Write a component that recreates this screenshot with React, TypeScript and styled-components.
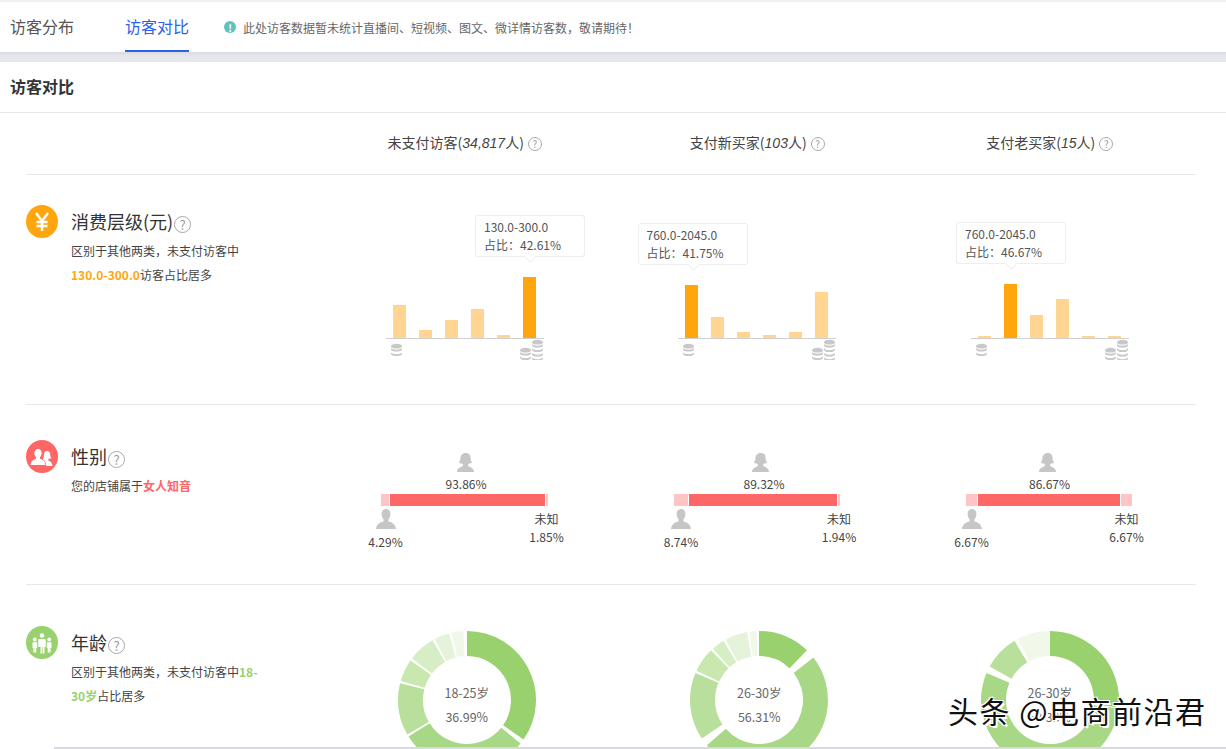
import styled, { createGlobalStyle } from "styled-components";

const orange = "#ffa60f";
const coral = "#ff6666";
const green = "#99d16e";

const GlobalStyle = createGlobalStyle`
  html, body {
    margin: 0;
    padding: 0;
    background: #fff;
    overflow: hidden;
  }
  * {
    box-sizing: border-box;
  }
  body {
    font-family: "Noto Sans CJK SC", "Liberation Sans", sans-serif;
    color: #333;
  }
`;

interface BarData {
  id: string;
  bars: number[];
  active: number;
  range: string;
  share: string;
}

interface GenderData {
  female: string;
  male: string;
  unknown: string;
  segments: number[];
  width: number;
  left: number;
  iconNudge: number;
  valueNudge: number;
  maleNudge: number;
  unknownNudge: number;
}

interface DonutData {
  label: string;
  share: string;
  shift: number;
  arcs: [number, number][];
}

const columns: { title: string; count: string }[] = [
  { title: "未支付访客", count: "34,817" },
  { title: "支付新买家", count: "103" },
  { title: "支付老买家", count: "15" },
];

const barCharts: BarData[] = [
  { id: "a", bars: [33, 8, 18, 29, 3, 61], active: 5, range: "130.0-300.0", share: "42.61%" },
  { id: "b", bars: [53, 21, 6, 3, 6, 46], active: 0, range: "760.0-2045.0", share: "41.75%" },
  { id: "c", bars: [2, 54, 23, 39, 2, 2], active: 1, range: "760.0-2045.0", share: "46.67%" },
];

const genders: GenderData[] = [
  { female: "93.86%", male: "4.29%", unknown: "1.85%", segments: [8, 155, 2], width: 167, left: 62, iconNudge: 2, valueNudge: 2, maleNudge: 0, unknownNudge: 0 },
  { female: "89.32%", male: "8.74%", unknown: "1.94%", segments: [14, 148, 2], width: 166, left: 63, iconNudge: 4, valueNudge: 7, maleNudge: 2, unknownNudge: 0 },
  { female: "86.67%", male: "6.67%", unknown: "6.67%", segments: [11, 142, 11], width: 166, left: 62, iconNudge: -1, valueNudge: 1, maleNudge: 1, unknownNudge: 4 },
];

const donuts: DonutData[] = [
  {
    label: "18-25岁",
    share: "36.99%",
    shift: 2,
    arcs: [[0, 125], [129, 238], [240, 284], [286, 305], [307, 330], [332, 345], [347, 357]],
  },
  {
    label: "26-30岁",
    share: "56.31%",
    shift: 2,
    arcs: [[0, 44], [52, 229], [236, 293], [295, 316], [318, 329], [331, 350], [352, 358]],
  },
  {
    label: "26-30岁",
    share: "53.33%",
    shift: 0,
    arcs: [[0, 96], [97, 293], [299, 329], [332, 360]],
  },
];

const arcColors = ["#99d16e", "#a8d886", "#b8e09c", "#c8e8b0", "#d6edc5", "#e5f3da", "#f1f8ea"];
const thirdArcColors = ["#99d16e", "#a8d886", "#b8e09c", "#f1f8ea"];

function polar(r: number, deg: number) {
  const rad = ((deg - 90) * Math.PI) / 180;
  return `${(70 + r * Math.cos(rad)).toFixed(2)} ${(70 + r * Math.sin(rad)).toFixed(2)}`;
}

function arcPath(start: number, end: number) {
  const large = end - start > 180 ? 1 : 0;
  return `M${polar(69, start)} A69 69 0 ${large} 1 ${polar(69, end)} L${polar(44, end)} A44 44 0 ${large} 0 ${polar(44, start)} Z`;
}

function Coin({ x, y, rows }: { x: number; y: number; rows: number }) {
  return (
    <g fill="#c8c8c8">
      <ellipse cx={x + 5.5} cy={y + 2.2} rx={5.5} ry={2.4} />
      {Array.from({ length: rows }).map((_, i) => (
        <path key={i} d={`M${x} ${y + i * 4.5 + 3.4} v1.800 a5.500 2.400 0 0 0 11 0 v-1.800 a5.500 2.400 0 0 1 -11 0 Z`} />
      ))}
    </g>
  );
}

function BarChart({ data }: { data: BarData }) {
  const axis = 68;
  const center = 7 + data.active * 26 + 6.5;
  return (
    <ChartBox>
      <Tooltip $left={center - 54} $bottom={90 - axis + data.bars[data.active] + 20}>
        <div>{data.range}</div>
        <div>占比：{data.share}</div>
      </Tooltip>
      <svg width="158" height="90" viewBox="0 0 158 90">
        {data.bars.map((h, i) => (
          <rect
            key={i}
            x={7 + i * 26}
            y={axis - h}
            width={13}
            height={h}
            fill={i === data.active ? orange : "#ffd591"}
          />
        ))}
        <rect x="0" y={axis} width="158" height="1" fill="#cfcfcf" />
        <Coin x={5} y={74} rows={2} />
        <Coin x={134} y={78} rows={2} />
        <Coin x={146} y={70} rows={4} />
      </svg>
    </ChartBox>
  );
}

function FemaleIcon() {
  return (
    <svg width="18" height="19" viewBox="0 0 18 19" fill="#c6c6c6">
      <path d="M9 0c3 0 4.600 2 4.600 5 0 2 .6 3.600 1.600 4.600-1 .8-2.200 1-3.200.8-.3.6-.6 1-1 1.300v1.200c1.800 1 5.800 1.500 6 6.100H0c.2-4.600 4.200-5.100 6-6.100v-1.200c-.4-.3-.7-.7-1-1.300-1 .2-2.200 0-3.200-.8 1-1 1.600-2.600 1.600-4.600C3.400 2 6 0 9 0Z" />
    </svg>
  );
}

function MaleIcon() {
  return (
    <svg width="20" height="20" viewBox="0 0 20 20" fill="#c6c6c6">
      <path d="M10 0c3 0 4.400 2.200 4.400 5 0 2.200-.8 4.200-2 5.400v1.800c2 1.100 7 1.800 7.600 7.800H0c.6-6 5.600-6.700 7.600-7.800v-1.800c-1.200-1.200-2-3.200-2-5.400C5.600 2.200 7 0 10 0Z" />
    </svg>
  );
}

function GenderChart({ data }: { data: GenderData }) {
  return (
    <GenderBox $width={data.width}>
      <FemaleBlock>
        <IconSlot $nudge={data.iconNudge}>
          <FemaleIcon />
        </IconSlot>
        <GenderValue $nudge={data.valueNudge}>{data.female}</GenderValue>
      </FemaleBlock>
      <GenderBar>
        {data.segments.map((w, i) => (
          <GenderSegment key={i} $width={w} $main={i === 1} />
        ))}
      </GenderBar>
      <GenderFoot>
        <MaleBlock $nudge={data.maleNudge}>
          <MaleIcon />
          <MaleValue>{data.male}</MaleValue>
        </MaleBlock>
        <UnknownBlock $nudge={data.unknownNudge}>
          <div>未知</div>
          <div>{data.unknown}</div>
        </UnknownBlock>
      </GenderFoot>
    </GenderBox>
  );
}

function DonutChart({ data, colors }: { data: DonutData; colors: string[] }) {
  return (
    <DonutBox $shift={data.shift}>
      <svg width="140" height="140" viewBox="0 0 140 140">
        {data.arcs.map(([start, end], i) => (
          <path key={i} d={arcPath(start, end)} fill={colors[i]} />
        ))}
      </svg>
      <DonutLabel>
        <div>{data.label}</div>
        <div>{data.share}</div>
      </DonutLabel>
    </DonutBox>
  );
}

function App() {
  return (
    <Page>
      <GlobalStyle />
      <TabBar>
        <Tab>访客分布</Tab>
        <Tab $active>访客对比</Tab>
        <Notice>
          <NoticeDot>!</NoticeDot>
          此处访客数据暂未统计直播间、短视频、图文、微详情访客数，敬请期待！
        </Notice>
      </TabBar>
      <Divider />
      <PanelTitle>访客对比</PanelTitle>
      <Content>
        <HeadRow>
          <span />
          {columns.map((c) => (
            <HeadCell key={c.title}>
              {c.title}(<em>{c.count}</em>人)
              <Help $size={14} />
            </HeadCell>
          ))}
        </HeadRow>
        <Section $height={230}>
          <Intro $top={30}>
            <IconCircle $color={orange}>
              <svg width="20" height="20" viewBox="0 0 20 20" fill="none" stroke="#fff" strokeWidth="2.4">
                <path d="M4 1l6 8 6-8M10 9v10M4.500 10h11M4.500 14h11" />
              </svg>
            </IconCircle>
            <IntroText>
              <IntroTitle>
                消费层级(元)
                <Help $size={17} />
              </IntroTitle>
              <IntroDesc>
                区别于其他两类，未支付访客中
                <br />
                <Strong $color={orange}>130.0-300.0</Strong>访客占比居多
              </IntroDesc>
            </IntroText>
          </Intro>
          {barCharts.map((d) => (
            <BarCell key={d.id}>
              <BarChart data={d} />
            </BarCell>
          ))}
        </Section>
        <Section $height={180}>
          <Intro $top={35}>
            <IconCircle $color={coral}>
              <svg width="24" height="18" viewBox="0 0 24 18" fill="#fff">
                <path d="M8 1c2.500 0 3.600 1.800 3.600 4 0 1.800-.7 3.400-1.600 4.300v1.400c1.500.8 5 1.300 5.500 6.300H.5c.5-5 4-5.500 5.500-6.300V9.300C5.100 8.400 4.400 6.800 4.400 5 4.400 2.800 5.500 1 8 1Z" />
                <path d="M17 3c2 0 3.200 1.400 3.200 3.500 0 1.600.5 2.800 1.200 3.500-.7.600-1.600.8-2.400.6-.2.400-.4.600-.7.900v.9c1.200.7 3.700 1 4.200 5.600h-6.100c-.2-3.600-1.700-5.200-3-6l-.4-1c.6-1 .9-2.200.9-3.400C13.900 4.400 15 3 17 3Z" />
              </svg>
            </IconCircle>
            <IntroText>
              <IntroTitle>
                性别
                <Help $size={17} />
              </IntroTitle>
              <IntroDesc>
                您的店铺属于<Strong $color={coral}>女人知音</Strong>
              </IntroDesc>
            </IntroText>
          </Intro>
          {genders.map((g) => (
            <GenderCell key={g.female} $left={g.left}>
              <GenderChart data={g} />
            </GenderCell>
          ))}
        </Section>
        <Section $height={170} $last>
          <Intro $top={41}>
            <IconCircle $color={green}>
              <svg width="22" height="22" viewBox="0 0 22 22" fill="#fff">
                <circle cx="11" cy="3.500" r="2.300" />
                <circle cx="3.800" cy="7.500" r="1.900" />
                <circle cx="18.200" cy="7.500" r="1.900" />
                <path d="M8.500 7h5c.8 0 1.200.5 1.200 1.200V15h-1.200v6.500h-1.700V15h-.6v6.500H9.500V15H7.300V8.200C7.300 7.500 7.700 7 8.500 7Z" />
                <path d="M1.500 10.300h4.700V16H5.300v4.500H4V16h-.2v4.500H2.400V16h-.9ZM15.800 10.300h4.700V16h-.9v4.500h-1.400V16H18v4.500h-1.300V16h-.9Z" />
              </svg>
            </IconCircle>
            <IntroText>
              <IntroTitle>
                年龄
                <Help $size={17} />
              </IntroTitle>
              <IntroDesc>
                区别于其他两类，未支付访客中<Strong $color={green}>18-</Strong>
                <br />
                <Strong $color={green}>30岁</Strong>占比居多
              </IntroDesc>
            </IntroText>
          </Intro>
          {donuts.map((d, i) => (
            <DonutCell key={i}>
              <DonutChart data={d} colors={i === 2 ? thirdArcColors : arcColors} />
            </DonutCell>
          ))}
        </Section>
      </Content>
      <BottomStrip />
      <Watermark>头条 @电商前沿君</Watermark>
    </Page>
  );
}

const Help = styled.span<{ $size: number }>`
  display: inline-flex;
  align-items: center;
  justify-content: center;
  width: ${({ $size }) => $size}px;
  height: ${({ $size }) => $size}px;
  margin-left: ${({ $size }) => ($size > 14 ? 1 : 4)}px;
  border: 1px solid #a8a8a8;
  border-radius: 50%;
  color: #9a9a9a;
  font-size: ${({ $size }) => $size - 4}px;
  line-height: 1;
  vertical-align: middle;

  &::before {
    content: "?";
  }
`;

const Page = styled.div`
  position: relative;
  width: 1226px;
  height: 749px;
  overflow: hidden;
  background: #fff;
  border-top: 2px solid #f0f0f2;
`;

const TabBar = styled.div`
  display: flex;
  align-items: stretch;
  height: 50px;
  padding-left: 10px;
`;

const Tab = styled.div<{ $active?: boolean }>`
  display: flex;
  align-items: center;
  margin-right: ${({ $active }) => ($active ? 35 : 51)}px;
  border-bottom: 2px solid ${({ $active }) => ($active ? "#2a62e8" : "transparent")};
  color: ${({ $active }) => ($active ? "#2a62e8" : "#555")};
  font-size: 16px;
  line-height: 24px;
`;

const Notice = styled.div`
  display: flex;
  align-items: center;
  gap: 7px;
  color: #666;
  font-size: 12px;
`;

const NoticeDot = styled.span`
  display: flex;
  align-items: center;
  justify-content: center;
  width: 12px;
  height: 12px;
  border-radius: 50%;
  background: #5cc3bf;
  color: #fff;
  font-size: 10px;
  font-weight: 700;
`;

const Divider = styled.div`
  height: 10px;
  background: linear-gradient(#d9dbe1, #e6e7ec 40%);
`;

const PanelTitle = styled.div`
  height: 51px;
  padding-left: 10px;
  border-bottom: 1px solid #e8e8e8;
  color: #333;
  font-size: 16px;
  font-weight: 700;
  line-height: 48px;
`;

const Content = styled.div`
  width: 1170px;
  margin-left: 26px;
`;

const HeadRow = styled.div`
  display: grid;
  grid-template-columns: repeat(4, 292.5px);
  height: 62px;
  border-bottom: 1px solid #e8e8e8;
`;

const HeadCell = styled.div`
  padding-top: 18px;
  color: #444;
  font-size: 14px;
  line-height: 22px;
  text-align: center;

  em {
    font-family: "Liberation Sans", sans-serif;
    font-style: italic;
  }
`;

const Section = styled.div<{ $height: number; $last?: boolean }>`
  display: grid;
  grid-template-columns: repeat(4, 292.5px);
  height: ${({ $height }) => $height}px;
  border-bottom: ${({ $last }) => ($last ? "none" : "1px solid #e8e8e8")};
`;

const Intro = styled.div<{ $top: number }>`
  display: flex;
  gap: 13px;
  padding-top: ${({ $top }) => $top}px;
`;

const IconCircle = styled.div<{ $color: string }>`
  display: flex;
  align-items: center;
  justify-content: center;
  flex: none;
  width: 32px;
  height: 33px;
  border-radius: 50%;
  background: ${({ $color }) => $color};
`;

const IntroText = styled.div`
  width: 200px;
`;

const IntroTitle = styled.div`
  height: 32px;
  color: #333;
  font-size: 18px;
  line-height: 32px;
`;

const IntroDesc = styled.div`
  margin-top: 2px;
  color: #444;
  font-size: 12px;
  line-height: 24px;
`;

const Strong = styled.span<{ $color: string }>`
  color: ${({ $color }) => $color};
  font-weight: 700;
`;

const BarCell = styled.div`
  padding: 95px 0 0 67px;
`;

const ChartBox = styled.div`
  position: relative;
  width: 158px;
  height: 90px;
`;

const Tooltip = styled.div<{ $left: number; $bottom: number }>`
  position: absolute;
  left: ${({ $left }) => $left}px;
  bottom: ${({ $bottom }) => $bottom}px;
  width: 110px;
  height: 42px;
  padding: 2px 8px;
  background: #fff;
  border: 1px solid #eeeeee;
  border-radius: 3px;
  color: #555;
  font-size: 12px;
  line-height: 18px;

  &::after {
    content: "";
    position: absolute;
    left: 50%;
    bottom: -5px;
    width: 8px;
    height: 8px;
    margin-left: -4px;
    background: #fff;
    border-right: 1px solid #eeeeee;
    border-bottom: 1px solid #eeeeee;
    transform: rotate(45deg);
  }
`;

const GenderCell = styled.div<{ $left: number }>`
  padding: 48px 0 0 ${({ $left }) => $left}px;
`;

const GenderBox = styled.div<{ $width: number }>`
  display: flex;
  flex-direction: column;
  width: ${({ $width }) => $width}px;
  color: #444;
  font-size: 12px;
`;

const FemaleBlock = styled.div`
  display: flex;
  flex-direction: column;
  align-items: center;
  height: 41px;
`;

const IconSlot = styled.div<{ $nudge: number }>`
  display: flex;
  margin-left: ${({ $nudge }) => $nudge * 2}px;
`;

const GenderValue = styled.div<{ $nudge: number }>`
  margin-top: 3px;
  margin-left: ${({ $nudge }) => $nudge * 2}px;
  line-height: 18px;
`;

const GenderBar = styled.div`
  display: flex;
  gap: 1px;
  height: 12px;
`;

const GenderSegment = styled.div<{ $width: number; $main: boolean }>`
  width: ${({ $width }) => $width}px;
  background: ${({ $main }) => ($main ? coral : "#ffc4c4")};
`;

const GenderFoot = styled.div`
  display: flex;
  justify-content: space-between;
  margin: 3px -19px 0 -15px;
`;

const MaleBlock = styled.div<{ $nudge: number }>`
  display: flex;
  flex-direction: column;
  align-items: center;
  width: 40px;
  margin-left: ${({ $nudge }) => $nudge}px;
`;

const MaleValue = styled.div`
  margin-top: 4px;
  line-height: 18px;
`;

const UnknownBlock = styled.div<{ $nudge: number }>`
  width: 40px;
  margin-right: ${({ $nudge }) => $nudge}px;
  padding-top: 1px;
  line-height: 18px;
  text-align: center;
`;

const DonutCell = styled.div`
  display: flex;
  justify-content: center;
  padding-top: 45px;
`;

const DonutBox = styled.div<{ $shift: number }>`
  position: relative;
  width: 140px;
  height: 140px;
  margin-left: ${({ $shift }) => $shift * 2}px;
`;

const DonutLabel = styled.div`
  position: absolute;
  inset: 0;
  display: flex;
  flex-direction: column;
  align-items: center;
  justify-content: center;
  padding-top: 10px;
  color: #666;
  font-size: 12.5px;
  line-height: 24px;
`;

const BottomStrip = styled.div`
  position: absolute;
  left: 54px;
  right: 0;
  bottom: 0;
  height: 2px;
  background: #d9d9e0;
`;

const Watermark = styled.div`
  position: absolute;
  left: 948px;
  top: 688px;
  color: #111;
  font-size: 30px;
  line-height: 40px;
  letter-spacing: 1.5px;
  white-space: nowrap;
  text-shadow: -1px -1px 0 #fff, 1px -1px 0 #fff, -1px 1px 0 #fff, 1px 1px 0 #fff, 2px 2px 0 #fff;
`;

export default App;
